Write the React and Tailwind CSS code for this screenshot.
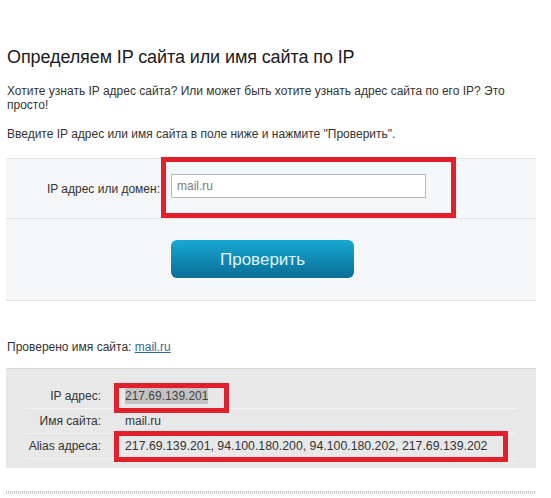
import React from "react";

export default function App() {
  return (
    <div className="w-[551px] min-h-[498px] bg-white font-['Liberation_Sans',Arial,sans-serif] text-[#333] pl-[6px] pr-[15px] overflow-hidden">
      <h1 className="pt-[46px] pl-[1px] text-[18px] leading-[22px] text-[#1a1a1a] font-normal tracking-[-0.1px]">
        Определяем IP сайта или имя сайта по IP
      </h1>
      <p className="mt-[16px] pl-[1px] text-[12px] leading-[14px]">
        Хотите узнать IP адрес сайта? Или может быть хотите узнать адрес сайта по его IP? Это
        <br />
        просто!
      </p>
      <p className="mt-[15px] pl-[1px] text-[12px] leading-[14px]">
        Введите IP адрес или имя сайта в поле ниже и нажмите "Проверить".
      </p>

      <div className="mt-[17px] bg-[#f4f6f8] border-t border-b border-[#dde1e4]">
        <div className="relative flex items-center h-[60px] border-b border-[#e0e4e7]">
          <label className="w-[155px] text-right text-[12px] text-[#333] pr-[1px]">IP адрес или домен:</label>
          <div className="ml-[10px] w-[255px] h-[24px] bg-white border border-[#b5b8bb] flex items-center pl-[5px] text-[12px] text-[#7a7a7a] mb-[5px]">
            mail.ru
          </div>
          <div className="absolute left-[155px] top-[-2px] w-[295px] h-[61px] border-[5px] border-[#e2202b]" />
        </div>
        <div className="h-[81px] flex items-start pt-[21px] pl-[165px]">
          <button className="w-[183px] h-[38px] rounded-[6px] bg-[linear-gradient(to_bottom,#17a9d2,#0a6d97)] text-[17px] text-[#dff4fb] leading-none">
            Проверить
          </button>
        </div>
      </div>

      <p className="mt-[39px] pl-[1px] text-[12px] leading-[14px]">
        Проверено имя сайта: <a className="text-[#2a6e8c] underline">mail.ru</a>
      </p>

      <div className="mt-[14px] bg-[#e8e8e8] border-t border-[#d6d6d6] pt-[15px] pb-[9px] px-[20px]">
        <div className="relative">
          <div className="flex items-center h-[25px] border-b border-[#f3f3f3] text-[12px]">
            <div className="w-[75px] text-right text-[#333]">IP адрес:</div>
            <div className="ml-[24px]"><span className="bg-[#c3c3c3] text-[#444] py-[1px]">217.69.139.201</span></div>
          </div>
          <div className="flex items-center h-[25px] border-b border-[#f3f3f3] text-[12px]">
            <div className="w-[75px] text-right text-[#333]">Имя сайта:</div>
            <div className="ml-[24px] text-[#333]">mail.ru</div>
          </div>
          <div className="flex items-center h-[25px] border-b border-[#f3f3f3] text-[12px]">
            <div className="w-[75px] text-right text-[#333]">Alias адреса:</div>
            <div className="ml-[24px] text-[#333] text-[12.3px]">217.69.139.201, 94.100.180.200, 94.100.180.202, 217.69.139.202</div>
          </div>
          <div className="absolute left-[88px] top-[-1px] w-[115px] h-[30px] border-[5px] border-[#e2202b]" />
          <div className="absolute left-[88px] top-[47px] w-[394px] h-[31px] border-[5px] border-[#e2202b]" />
        </div>
      </div>

      <div className="mt-[23px] h-[3px] bg-[repeating-linear-gradient(90deg,#c8c8c8_0_1px,transparent_1px_2px)]" />
    </div>
  );
}
